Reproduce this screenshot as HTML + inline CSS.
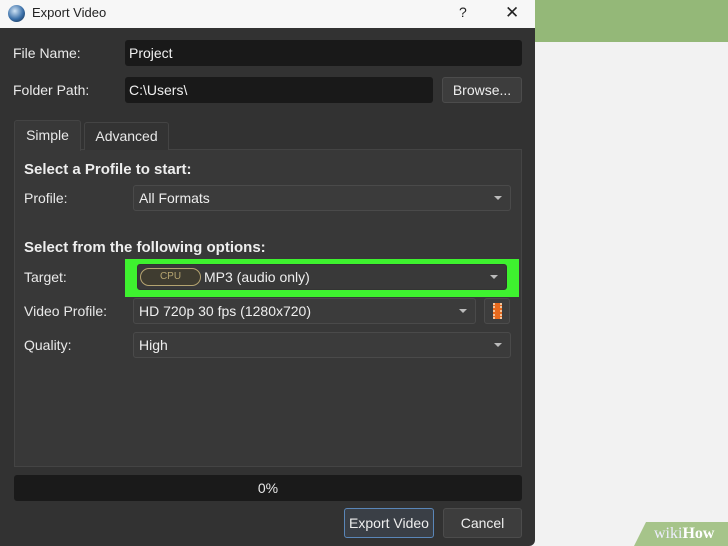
<!DOCTYPE html>
<html><head><meta charset="utf-8"><style>
*{box-sizing:border-box;margin:0;padding:0}
body{width:728px;height:546px;overflow:hidden;background:#f2f2f2;font-family:"Liberation Sans",sans-serif;position:relative;color:#e8e8e8;font-size:14px}
.a{position:absolute}
.in{background:#191919;border-radius:3px;padding-left:4px;line-height:26px;font-size:14px;color:#f0f0f0}
.cb{background:#3b3b3b;border:1px solid #4a4a4a;border-radius:3px;padding-left:5px;line-height:24px;font-size:14px;color:#eee}
.cb:after{content:"";position:absolute;right:8px;top:10px;border-left:4px solid transparent;border-right:4px solid transparent;border-top:4px solid #bbb}
.btn{background:#3d3d3d;border:1px solid #4c4c4c;border-radius:3px;text-align:center;font-size:14px;color:#eee}
.lbl{font-size:14px;color:#eaeaea}
</style></head><body>
<div class="a" style="left:535px;top:0;width:193px;height:42px;background:#94b878"></div>
<div class="a" style="left:0;top:0;width:535px;height:546px;background:#323232;border-radius:0 0 6px 0"></div>
<div class="a" style="left:0;top:0;width:535px;height:28px;background:#f7f7f7"></div>
<div class="a" style="left:8px;top:5px;width:17px;height:17px;border-radius:50%;background:radial-gradient(circle at 40% 35%,#cfe3f5,#3a6fa8 55%,#102540)"></div>
<div class="a" style="left:32px;top:5px;font-size:13px;color:#222">Export Video</div>
<div class="a" style="left:459px;top:4px;font-size:14px;color:#222">?</div>
<div class="a" style="left:505px;top:3px;font-size:17px;color:#222">✕</div>

<div class="a lbl" style="left:13px;top:45px">File Name:</div>
<div class="a in" style="left:125px;top:40px;width:397px;height:26px">Project</div>
<div class="a lbl" style="left:13px;top:82px">Folder Path:</div>
<div class="a in" style="left:125px;top:77px;width:308px;height:26px">C:\Users\</div>
<div class="a btn" style="left:442px;top:77px;width:80px;height:26px;line-height:24px">Browse...</div>

<div class="a" style="left:14px;top:149px;width:508px;height:318px;background:#383838;border:1px solid #444"></div>
<div class="a" style="left:14px;top:120px;width:67px;height:31px;background:#383838;border:1px solid #444;border-bottom:none;border-radius:3px 3px 0 0;text-align:center;line-height:29px">Simple</div>
<div class="a" style="left:84px;top:122px;width:85px;height:28px;background:#333;border:1px solid #444;border-bottom:none;border-radius:3px 3px 0 0;text-align:center;line-height:27px">Advanced</div>

<div class="a" style="left:24px;top:161px;font-size:15px;font-weight:bold;color:#eee">Select a Profile to start:</div>
<div class="a lbl" style="left:24px;top:190px">Profile:</div>
<div class="a cb" style="left:133px;top:185px;width:378px;height:26px">All Formats</div>

<div class="a" style="left:24px;top:239px;font-size:15px;font-weight:bold;color:#eee">Select from the following options:</div>
<div class="a lbl" style="left:24px;top:269px">Target:</div>
<div class="a" style="left:125px;top:259px;width:394px;height:38px;background:#3ef22f"></div>
<div class="a cb" style="left:137px;top:264px;width:370px;height:26px;background:#393939;border-color:#333;padding-left:66px">MP3 (audio only)</div>
<div class="a" style="left:140px;top:268px;width:61px;height:18px;border:1.5px solid #b5a470;border-radius:9px;background:#3f3c30;color:#b5a470;font-size:10px;text-align:center;line-height:15px">CPU</div>
<div class="a lbl" style="left:24px;top:303px">Video Profile:</div>
<div class="a cb" style="left:133px;top:298px;width:343px;height:26px">HD 720p 30 fps (1280x720)</div>
<div class="a btn" style="left:484px;top:298px;width:26px;height:26px"><div class="a" style="left:8px;top:4px;width:9px;height:16px;background:#e86a1e;border-left:2px dotted #f4c39a;border-right:2px dotted #f4c39a"></div></div>
<div class="a lbl" style="left:24px;top:337px">Quality:</div>
<div class="a cb" style="left:133px;top:332px;width:378px;height:26px">High</div>

<div class="a" style="left:14px;top:475px;width:508px;height:26px;background:#1a1a1a;border-radius:3px;text-align:center;line-height:26px;font-size:14px">0%</div>
<div class="a btn" style="left:344px;top:508px;width:90px;height:30px;line-height:28px;border-color:#5a86b8;background:#3a3f46">Export Video</div>
<div class="a btn" style="left:443px;top:508px;width:79px;height:30px;line-height:28px">Cancel</div>

<div class="a" style="left:634px;top:522px;width:94px;height:24px;background:#a6c48a;clip-path:polygon(12px 0,100% 0,100% 100%,0 100%)"></div>
<div class="a" style="left:654px;top:525px;font-family:'Liberation Serif',serif;font-size:16px;color:#fff"><span style="color:#eef">wiki</span><b>How</b></div>
</body></html>
